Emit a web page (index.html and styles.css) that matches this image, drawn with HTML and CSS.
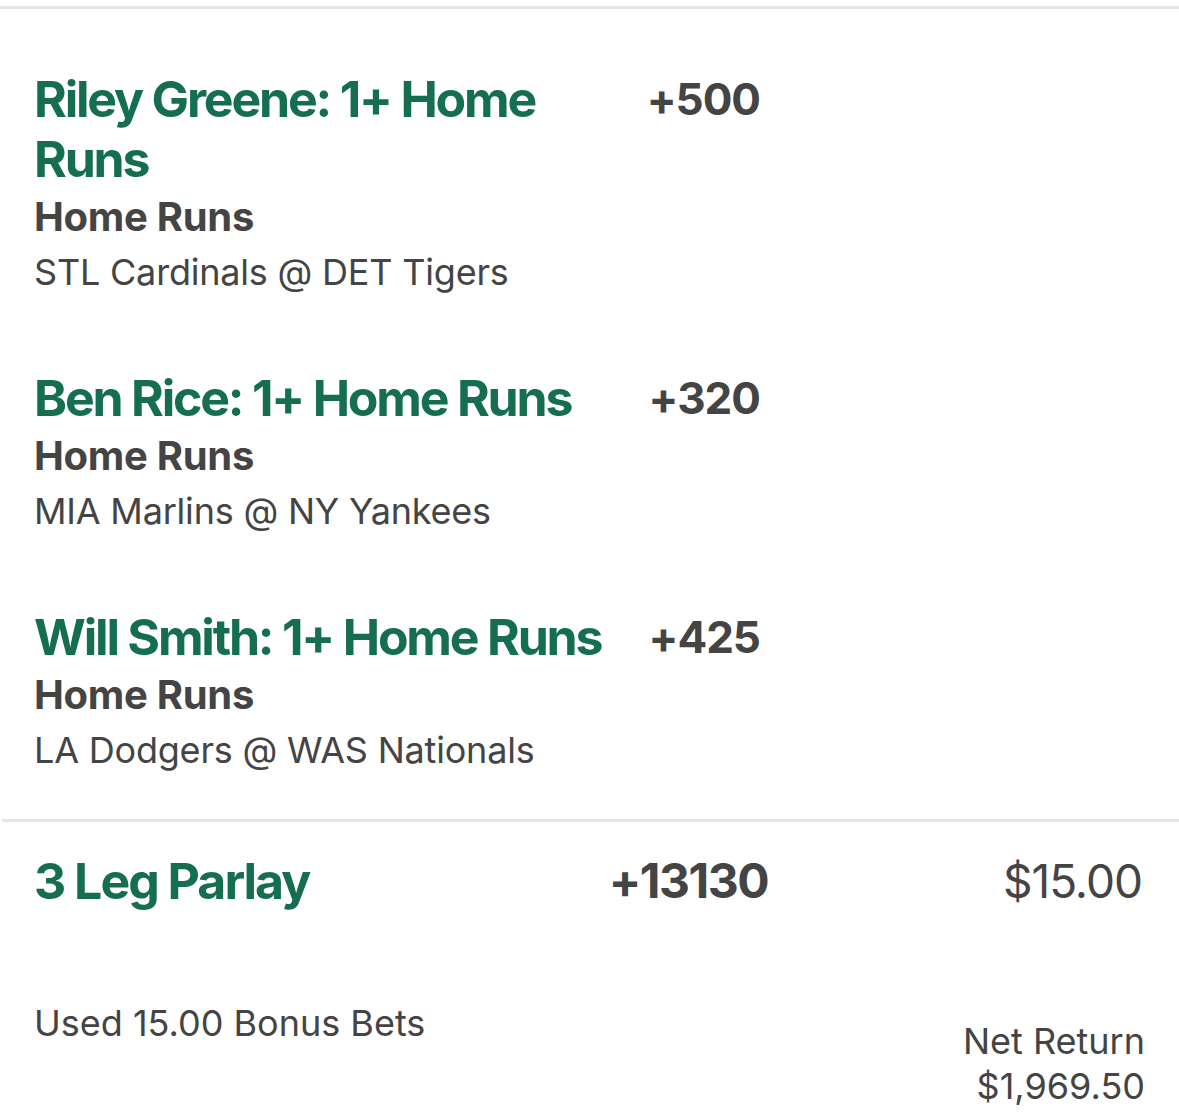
FILE: index.html
```html
<!DOCTYPE html>
<html lang="en">
<head>
<meta charset="utf-8">
<title>Parlay</title>
<link rel="stylesheet" href="styles.css">
</head>
<body>
<div class="rule rule-top"></div>
<section class="legs">
  <div class="leg">
    <div class="leg-info">
      <div class="leg-title">Riley Greene: 1+ Home Runs</div>
      <div class="leg-market">Home Runs</div>
      <div class="leg-game">STL Cardinals @ DET Tigers</div>
    </div>
    <div class="leg-odds">+500</div>
  </div>
  <div class="leg">
    <div class="leg-info">
      <div class="leg-title">Ben Rice: 1+ Home Runs</div>
      <div class="leg-market">Home Runs</div>
      <div class="leg-game">MIA Marlins @ NY Yankees</div>
    </div>
    <div class="leg-odds">+320</div>
  </div>
  <div class="leg">
    <div class="leg-info">
      <div class="leg-title">Will Smith: 1+ Home Runs</div>
      <div class="leg-market">Home Runs</div>
      <div class="leg-game">LA Dodgers @ WAS Nationals</div>
    </div>
    <div class="leg-odds">+425</div>
  </div>
</section>
<div class="rule rule-mid"></div>
<section class="summary">
  <div class="summary-head">
    <div class="parlay-name">3 Leg Parlay</div>
    <div class="parlay-odds">+13130</div>
    <div class="parlay-stake">$15.00</div>
  </div>
  <div class="summary-foot">
    <div class="bonus">Used 15.00 Bonus Bets</div>
    <div class="net">
      <div>Net Return</div>
      <div>$1,969.50</div>
    </div>
  </div>
</section>
</body>
</html>
```
FILE: styles.css
```css
html, body {
  margin: 0;
  padding: 0;
  background: #ffffff;
}
body {
  font-family: Inter, "Noto Sans", sans-serif;
  color: #444444;
  width: 1179px;
  height: 1118px;
  overflow: hidden;
}
.rule {
  height: 3px;
  background: #e5e5e5;
}
.rule-top {
  margin-top: 6px;
}
.rule-mid {
  margin-left: 2px;
}
.legs {
  padding: 60px 34px 42px;
  display: flex;
  flex-direction: column;
  gap: 69px;
}
.leg {
  display: flex;
  align-items: flex-start;
}
.leg-info {
  width: 590px;
}
.leg-title {
  font-size: 50px;
  line-height: 60px;
  font-weight: 700;
  letter-spacing: -2.2px;
  color: #156f4e;
}
.leg-market {
  font-size: 40px;
  line-height: 56px;
  font-weight: 700;
  letter-spacing: -0.3px;
}
.leg-game {
  font-size: 36px;
  line-height: 54px;
  font-weight: 400;
  letter-spacing: -0.2px;
}
.leg-odds {
  width: 136px;
  text-align: right;
  font-size: 44px;
  line-height: 60px;
  font-weight: 700;
  letter-spacing: -1px;
}
.summary {
  padding: 29px 34px 0 34px;
}
.summary-head {
  display: grid;
  grid-template-columns: 534px 200px 1fr;
  align-items: start;
}
.parlay-name {
  font-size: 50px;
  line-height: 60px;
  font-weight: 700;
  letter-spacing: -2px;
  color: #156f4e;
}
.parlay-odds {
  font-size: 48px;
  line-height: 60px;
  font-weight: 700;
  letter-spacing: -1.5px;
  text-align: right;
}
.parlay-stake {
  font-size: 46px;
  line-height: 60px;
  font-weight: 400;
  letter-spacing: -1px;
  text-align: right;
  padding-right: 3px;
}
.summary-foot {
  display: flex;
  justify-content: space-between;
  align-items: flex-start;
  margin-top: 90px;
}
.bonus {
  font-size: 36px;
  line-height: 45px;
}
.net {
  margin-top: 18px;
  font-size: 36px;
  line-height: 45px;
  text-align: right;
}
```
